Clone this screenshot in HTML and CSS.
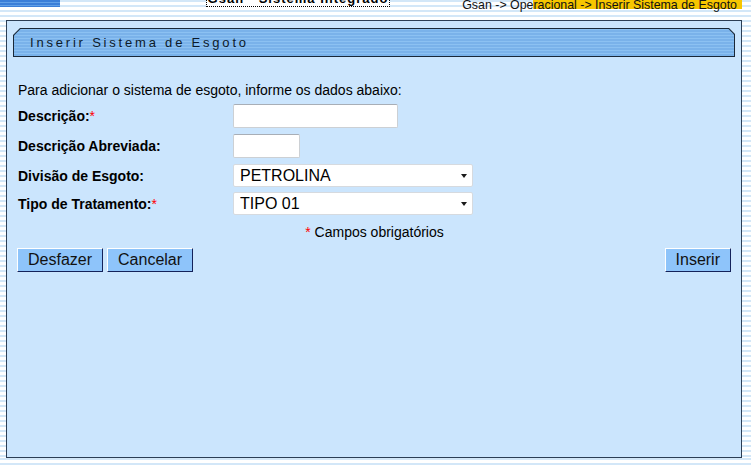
FILE: index.html
```html
<!DOCTYPE html>
<html lang="pt-BR">

<head>
    <meta charset="UTF-8">
    <meta name="viewport" content="width=device-width, initial-scale=1.0">
    <title>Inserir Sistema de Esgoto</title>

    <link rel="stylesheet" href="styles.css">

</head>

<body>

    <div class="topbar">
        <div class="logo-strip"></div>
        <div class="menu-tab"><span>Gsan - Sistema Integrado</span></div>
        <div class="crumb">Gsan -&gt; Operacional -&gt; Inserir Sistema de Esgoto</div>
    </div>

    <div class="panel">
        <div class="title-outer">
            <div class="title-inner">Inserir Sistema de Esgoto</div>
        </div>

        <form class="form" id="myform" onsubmit="return false">
            <p class="intro">Para adicionar o sistema de esgoto, informe os dados abaixo:</p>

            <div class="row">
                <label for="descricao">Descrição:<span class="req">*</span></label>
                <input type="text" id="descricao" class="txt txt-long">
            </div>
            <div class="row">
                <label for="abreviada">Descrição Abreviada:</label>
                <input type="text" id="abreviada" class="txt txt-short">
            </div>
            <div class="row row-sel">
                <label for="divisao">Divisão de Esgoto:</label>
                <div class="select-wrap">
                    <select id="divisao">
                        <option value="1">PETROLINA</option>
                    </select>
                </div>
            </div>
            <div class="row row-sel">
                <label for="tipo">Tipo de Tratamento:<span class="req">*</span></label>
                <div class="select-wrap">
                    <select id="tipo">
                        <option value="1">TIPO 01</option>
                    </select>
                </div>
            </div>

            <p class="note"><span class="req">*</span> Campos obrigatórios</p>

            <div class="actions">
                <div class="actions-left">
                    <button type="button" class="btn">Desfazer</button>
                    <button type="button" class="btn">Cancelar</button>
                </div>
                <button type="submit" class="btn">Inserir</button>
            </div>
        </form>
    </div>

</body>

</html>
```

FILE: styles.css
```css
* {
    box-sizing: border-box;
}

body {
    margin: 0;
    font-family: "Liberation Sans", Arial, sans-serif;
    color: #000;
    background: repeating-linear-gradient(to bottom, #d3e7f8 0px, #d3e7f8 2px, #ffffff 2px, #ffffff 5px);
}

.topbar {
    display: flex;
    height: 20px;
    align-items: flex-start;
}

.logo-strip {
    width: 60px;
    height: 7px;
    background: repeating-linear-gradient(to bottom, #3c7fd8 0px, #3c7fd8 2px, #62a0e6 2px, #62a0e6 3px);
}

.menu-tab {
    margin-left: 146px;
    width: 184px;
    height: 7px;
    overflow: hidden;
    border: 1px dotted #000;
    border-top: none;
    background: #ffffff;
    text-align: center;
}

.menu-tab span {
    display: block;
    margin-top: -7px;
    font-size: 13px;
    font-weight: bold;
    letter-spacing: 1px;
    line-height: 12px;
}

.crumb {
    margin-left: auto;
    margin-right: 9px;
    margin-top: -1px;
    padding-right: 5px;
    font-size: 12.4px;
    line-height: 12px;
    color: #111;
    background: linear-gradient(to right, transparent 71px, #f7c600 71px) no-repeat;
    background-size: 100% 10px;
}

.panel {
    margin-left: 6px;
    width: 736px;
    height: 438px;
    border: 1px solid #2c3e55;
    background: #cbe5fd;
    padding: 7px 6px;
}

.title-outer {
    height: 29px;
    padding: 1px;
    background: #1a2838;
    clip-path: polygon(7px 0, calc(100% - 6px) 0, 100% 6px, 100% 100%, 0 100%, 0 7px);
}

.title-inner {
    height: 27px;
    padding-left: 16px;
    font-size: 13px;
    line-height: 28px;
    letter-spacing: 2.8px;
    color: #0c1a2a;
    background: repeating-linear-gradient(to bottom, #8cc1f2 0px, #8cc1f2 1px, #7ab2ea 1px, #7ab2ea 3px);
    clip-path: polygon(6.5px 0, calc(100% - 5.5px) 0, 100% 5.5px, 100% 100%, 0 100%, 0 6.5px);
}

.form {
    margin-top: 25px;
    padding: 0 4px 0 5px;
    font-size: 14px;
}

.intro {
    margin: 0 0 6px 0;
    line-height: 16px;
}

.row {
    display: flex;
    align-items: center;
    margin-bottom: 6px;
}

.row-sel {
    margin-bottom: 5px;
}

.row label {
    width: 215px;
    font-weight: bold;
    line-height: 16px;
}

.req {
    color: #ff0000;
    font-weight: normal;
}

.txt {
    height: 24px;
    margin: 0;
    border: 1px solid #ccd0d4;
    border-top-color: #a8aeb6;
    border-radius: 2px;
    background: #fff;
    font-family: "Liberation Sans", Arial, sans-serif;
    font-size: 14px;
}

.txt-long {
    width: 165px;
}

.txt-short {
    width: 67px;
}

.select-wrap {
    position: relative;
    width: 240px;
}

.select-wrap::after {
    content: "";
    position: absolute;
    right: 6px;
    top: 10px;
    border-left: 3.5px solid transparent;
    border-right: 3.5px solid transparent;
    border-top: 4px solid #1a1a1a;
    pointer-events: none;
}

.select-wrap select {
    appearance: none;
    -webkit-appearance: none;
    width: 100%;
    height: 23px;
    margin: 0;
    padding: 0 0 0 6px;
    border: 1px solid #d6dadf;
    border-radius: 2px;
    background: #fff;
    color: #000;
    font-family: "Liberation Sans", Arial, sans-serif;
    font-size: 16px;
}

.note {
    margin: 9px 0 8px 0;
    line-height: 16px;
    text-align: center;
}

.actions {
    display: flex;
    justify-content: space-between;
    margin-left: -1px;
}

.actions-left {
    display: flex;
    gap: 4px;
}

.btn {
    height: 24px;
    margin: 0;
    padding: 0 10px;
    border: 1px solid #14225a;
    border-top-color: #ffffff;
    border-left-color: #ffffff;
    background: #8ec4fa;
    color: #111;
    font-family: "Liberation Sans", Arial, sans-serif;
    font-size: 16px;
}
```
